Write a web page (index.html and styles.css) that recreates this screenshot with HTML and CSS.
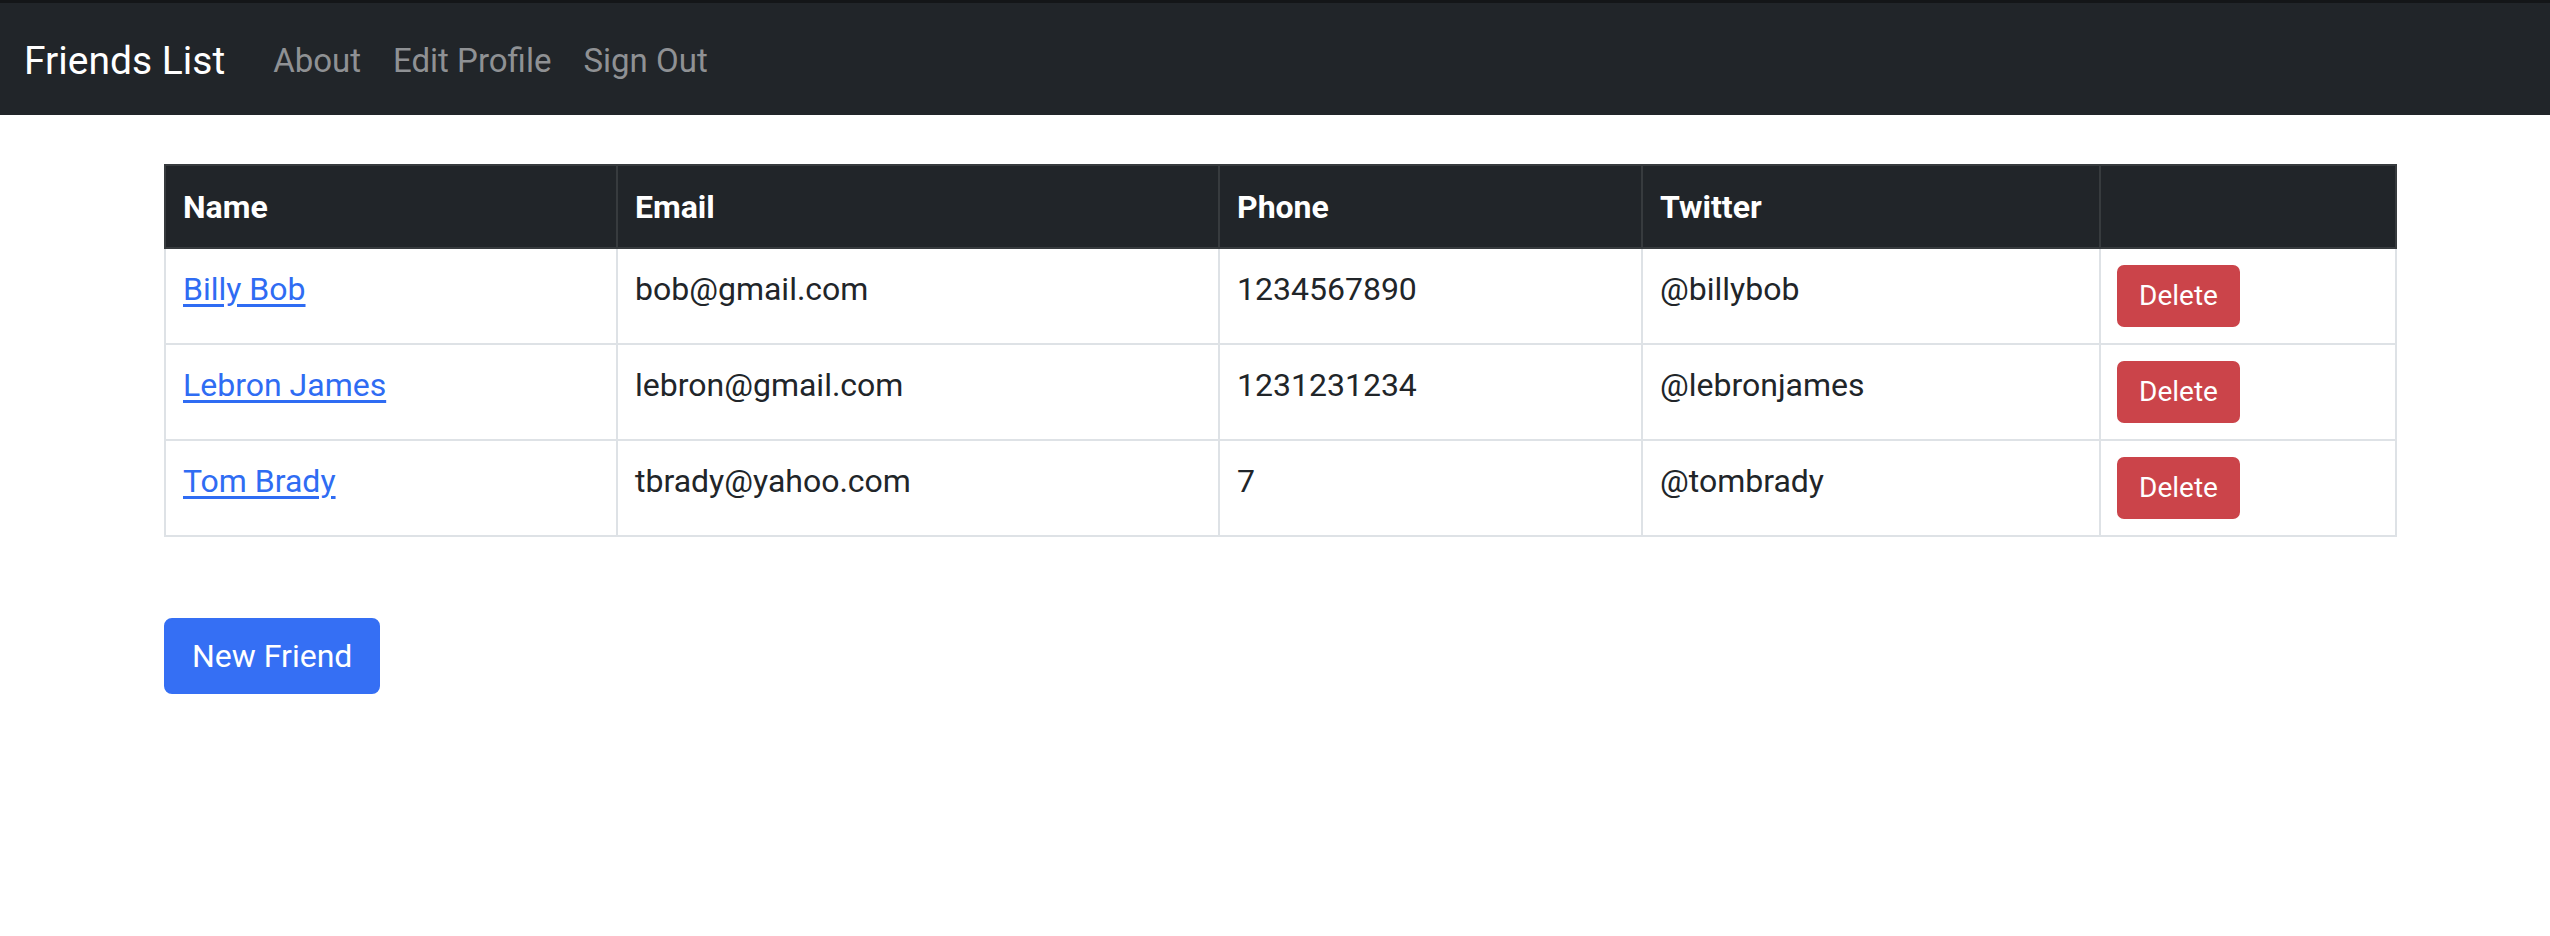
FILE: index.html
```html
<!DOCTYPE html>
<html lang="en">
<head>
<meta charset="utf-8">
<title>Friends List</title>
<link rel="stylesheet" href="styles.css">
</head>
<body>
<nav class="navbar">
  <a class="brand" href="#">Friends List</a>
  <ul class="nav">
    <li><a href="#">About</a></li>
    <li><a href="#">Edit Profile</a></li>
    <li><a href="#">Sign Out</a></li>
  </ul>
</nav>
<main class="page">
  <table class="friends">
    <colgroup>
      <col class="c-name"><col class="c-email"><col class="c-phone"><col class="c-twitter"><col class="c-actions">
    </colgroup>
    <thead>
      <tr><th>Name</th><th>Email</th><th>Phone</th><th>Twitter</th><th></th></tr>
    </thead>
    <tbody>
      <tr><td><a href="#">Billy Bob</a></td><td>bob@gmail.com</td><td>1234567890</td><td>@billybob</td><td class="actions"><button class="btn-del">Delete</button></td></tr>
      <tr><td><a href="#">Lebron James</a></td><td>lebron@gmail.com</td><td>1231231234</td><td>@lebronjames</td><td class="actions"><button class="btn-del">Delete</button></td></tr>
      <tr><td><a href="#">Tom Brady</a></td><td>tbrady@yahoo.com</td><td>7</td><td>@tombrady</td><td class="actions"><button class="btn-del">Delete</button></td></tr>
    </tbody>
  </table>
  <a class="btn-new" href="#">New Friend</a>
</main>
</body>
</html>
```
FILE: styles.css
```css
* { box-sizing: border-box; }
body {
  margin: 0;
  font-family: Roboto, "Liberation Sans", sans-serif;
  font-size: 32px;
  line-height: 48px;
  color: #212529;
  background: #fff;
}
.navbar {
  display: flex;
  align-items: center;
  height: 115px;
  padding: 3px 24px 0;
  background: #212529;
  border-top: 3px solid #141618;
}
.brand {
  font-size: 39px;
  line-height: 60px;
  color: #fff;
  text-decoration: none;
  margin-right: 32px;
}
.nav {
  display: flex;
  list-style: none;
  margin: 0;
  padding: 0;
}
.nav a {
  display: block;
  padding: 16px;
  font-size: 33px;
  color: #8f9194;
  text-decoration: none;
}
.page {
  padding: 49px 155px 0 164px;
}
.friends {
  width: 2231px;
  border-collapse: collapse;
  table-layout: fixed;
  margin-bottom: 81px;
}
.c-name { width: 452px; }
.c-email { width: 602px; }
.c-phone { width: 423px; }
.c-twitter { width: 458px; }
.c-actions { width: 296px; }
.friends th,
.friends td {
  padding: 16px 17px;
  text-align: left;
  vertical-align: top;
  border: 2px solid #dee2e6;
}
.friends th {
  background: #212529;
  color: #fff;
  font-weight: 700;
  border-color: #373b3e;
  padding-top: 17px;
}
.friends td a {
  color: #2f6cf3;
  text-decoration: underline;
  text-underline-offset: 4px;
}
.friends td.actions {
  line-height: 0;
  padding-left: 16px;
}
.btn-del {
  display: inline-block;
  vertical-align: top;
  font-family: inherit;
  font-size: 28px;
  line-height: 42px;
  padding: 8px 20px;
  color: #fff;
  background: #cb444a;
  border: 2px solid #cb444a;
  border-radius: 7px;
}
.btn-new {
  display: inline-block;
  font-size: 32px;
  line-height: 48px;
  padding: 12px 26px;
  color: #fff;
  background: #356ff4;
  border: 2px solid #356ff4;
  border-radius: 8px;
  text-decoration: none;
}
```
